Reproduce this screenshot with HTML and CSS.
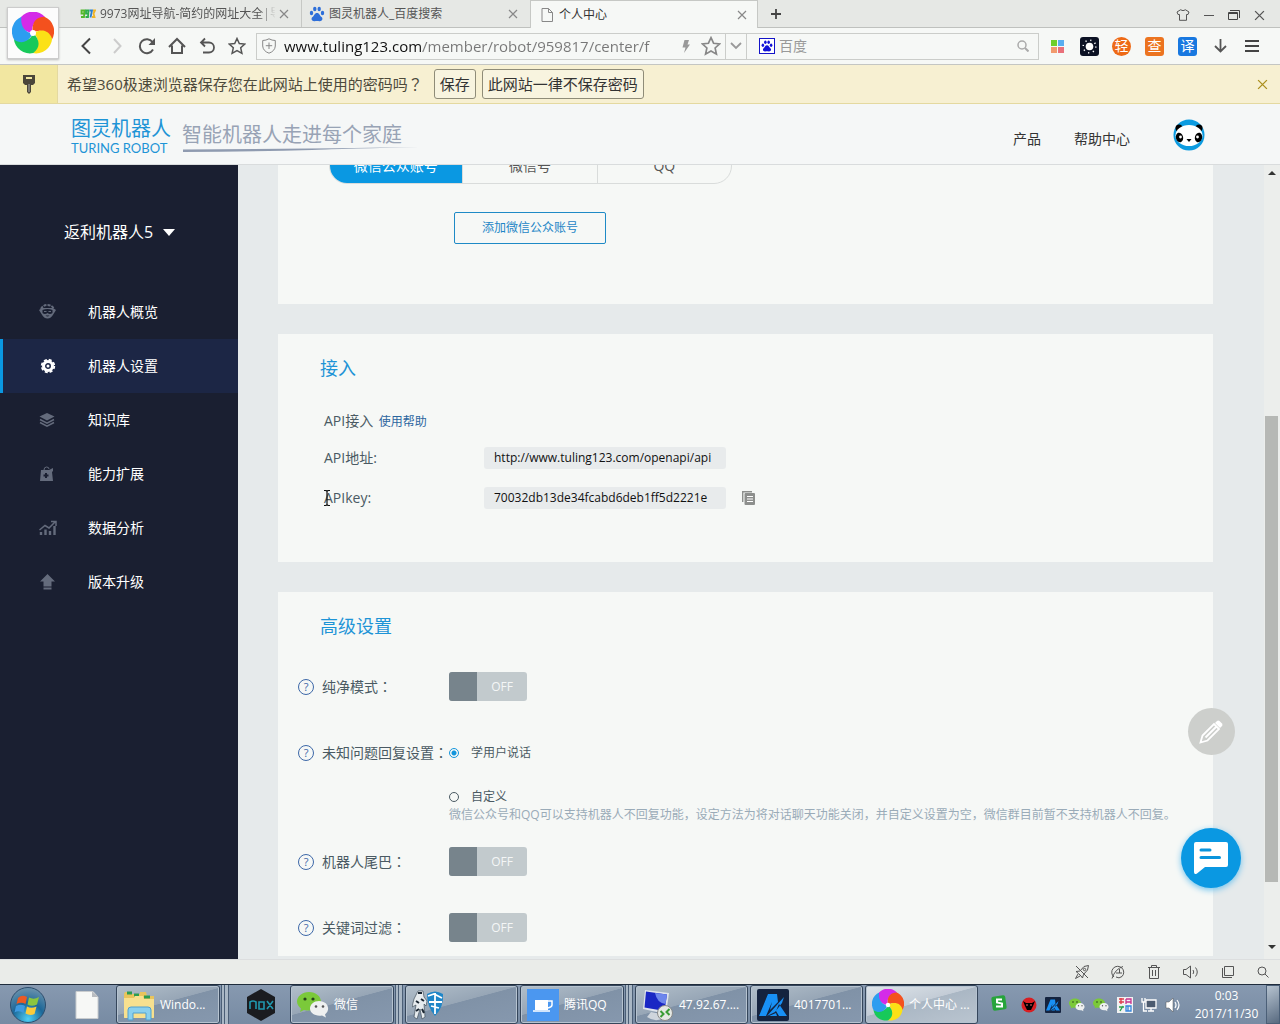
FILE: index.html
```html
<!DOCTYPE html>
<html lang="zh-CN">
<head>
<meta charset="utf-8">
<title>个人中心</title>
<meta name="viewport" content="width=device-width, initial-scale=1">
<link rel="stylesheet" href="styles.css">
</head>
<body>
<svg class="sprite" aria-hidden="true">
  <defs>
    <path id="petal" d="M0 0C-9 -1 -15 -7 -12 -16A16 16 0 0 1 12 -16C4 -15 -3 -8 0 0Z"/>
    <symbol id="pinwheel" viewBox="-21 -21 42 42">
      <use href="#petal" fill="#d42be8"/>
      <use href="#petal" fill="#f4511e" transform="rotate(72)"/>
      <use href="#petal" fill="#fbe116" transform="rotate(144)"/>
      <use href="#petal" fill="#17c95a" transform="rotate(216)"/>
      <use href="#petal" fill="#2d9df0" transform="rotate(288)"/>
      <circle r="3" fill="#fff"/>
    </symbol>
    <symbol id="paw" viewBox="0 0 16 16">
      <ellipse cx="2.500" cy="7" rx="1.700" ry="2.200"/><ellipse cx="5.800" cy="3" rx="1.700" ry="2.300"/><ellipse cx="10.200" cy="3" rx="1.700" ry="2.300"/><ellipse cx="13.500" cy="7" rx="1.700" ry="2.200"/>
      <path d="M8 7C5.500 7 5.500 9.500 3.500 11C1.500 12.500 3 15.500 5.500 15.200C7.500 14.900 8.500 14.900 10.500 15.200C13 15.500 14.500 12.500 12.500 11C10.500 9.500 10.500 7 8 7Z"/>
    </symbol>
    <symbol id="cross" viewBox="0 0 10 10"><path d="M1 1L9 9M9 1L1 9" fill="none" stroke="currentColor" stroke-width="1.200"/></symbol>
    <symbol id="star" viewBox="0 0 18 18"><path d="M9 1.500L11.300 6.500L16.800 7.100L12.700 10.800L13.900 16.300L9 13.500L4.100 16.300L5.300 10.800L1.200 7.100L6.700 6.500Z" fill="none" stroke="currentColor" stroke-width="1.500"/></symbol>
    <symbol id="wechat" viewBox="0 0 32 26">
      <path d="M12 0C5 0 0 4.500 0 9.500C0 12.500 2 15 4 16.500L3 20L7 18C16 20 24 16 24 9.500C24 4.500 19 0 12 0Z" fill="#7bc93a"/>
      <circle cx="8" cy="7" r="1.600" fill="#27431a"/><circle cx="16" cy="7" r="1.600" fill="#27431a"/>
      <path d="M22 9C17 9 13 12.500 13 16.500C13 21 18 24.500 25 23.500L29 25.500L28 22.500C34 18 31 9 22 9Z" fill="#eef0f0"/>
      <circle cx="19" cy="14.500" r="1.300" fill="#555"/><circle cx="26" cy="14.500" r="1.300" fill="#555"/>
    </symbol>
    <symbol id="letter-a" viewBox="0 0 32 32">
      <rect width="32" height="32" rx="2" fill="#14233f"/>
      <path d="M11 5H20L21 13L13 21L15 13L9 27H2ZM22 15L30 27H22L19 22ZM27 8L10 27L18 23L25 14ZM12 27L19 24L20 27Z" fill="#1890f5"/>
    </symbol>
  </defs>
</svg>

<header class="browser">
  <a class="browser-logo" href="#" aria-label="360极速浏览器"><svg width="42" height="42"><use href="#pinwheel"/></svg></a>
  <div class="tabs">
    <div class="tab tab-first">
      <svg width="16" height="10" viewBox="0 0 16 10" fill="none" stroke-width="1.800"><path d="M5 4.500H1.500V1.500H4.500L4 8H1" stroke="#55b82c"/><path d="M9 4.500H6V1.500H8.500L8 8H5.500" stroke="#2fae4a"/><path d="M9.500 1.500H12L10.500 8.500" stroke="#2b7fd0"/><path d="M13 1.500H15L13.500 4.500L14.500 8H12" stroke="#f0b429"/></svg>
      <span class="tab-title tab-fade">9973网址导航-简约的网址大全|导航</span>
      <button class="plain" aria-label="关闭"><svg width="10" height="10"><use href="#cross"/></svg></button>
    </div>
    <div class="tab">
      <svg width="16" height="16" fill="#2e6fd9"><use href="#paw"/></svg>
      <span class="tab-title">图灵机器人_百度搜索</span>
      <button class="plain" aria-label="关闭"><svg width="10" height="10"><use href="#cross"/></svg></button>
    </div>
    <div class="tab tab-active">
      <svg width="12" height="14" viewBox="0 0 12 14"><path d="M1 .5H7.500L11.500 4.500V13.500H1ZM7.500 .5V4.500H11.500" fill="none" stroke="#888"/></svg>
      <span class="tab-title">个人中心</span>
      <button class="plain" aria-label="关闭"><svg width="10" height="10"><use href="#cross"/></svg></button>
    </div>
    <button class="plain new-tab" aria-label="新标签页"><svg width="12" height="12" viewBox="0 0 12 12"><path d="M6 1V11M1 6H11" stroke="#444" stroke-width="1.800"/></svg></button>
    <div class="window-controls">
      <button class="plain" aria-label="皮肤"><svg width="14" height="12" viewBox="0 0 14 12"><path d="M4.500 .8Q7 2.500 9.500 .8L13 3L12 5.500H10.500V11.300H3.500V5.500H2L1 3Z" fill="none" stroke="#555"/></svg></button>
      <button class="plain" aria-label="最小化"><svg width="10" height="12" viewBox="0 0 10 12"><path d="M0 6.500H10" stroke="#555"/></svg></button>
      <button class="plain" aria-label="还原"><svg width="12" height="12" viewBox="0 0 12 12"><path d="M.5 3.500H9.500V10.500H.5ZM.5 4.500H9.500M2 1.500H11.500V9" fill="none" stroke="#444"/></svg></button>
      <button class="plain" aria-label="关闭窗口"><svg width="11" height="11"><use href="#cross"/></svg></button>
    </div>
  </div>
  <div class="toolbar">
    <nav class="tools" aria-label="浏览">
      <button class="plain" aria-label="后退"><svg width="18" height="18" viewBox="0 0 18 18"><path d="M12 1.500L4.500 9L12 16.500" fill="none" stroke="#444" stroke-width="2"/></svg></button>
      <button class="plain" aria-label="前进"><svg width="18" height="18" viewBox="0 0 18 18"><path d="M6 2L12.500 9L6 16" fill="none" stroke="#ccc" stroke-width="2"/></svg></button>
      <button class="plain" aria-label="刷新"><svg width="18" height="18" viewBox="0 0 18 18"><path d="M15 12.500A7 7 0 1 1 14.500 5" fill="none" stroke="#555" stroke-width="2"/><path d="M17 1V8H10.500Z" fill="#555"/></svg></button>
      <button class="plain" aria-label="主页"><svg width="18" height="18" viewBox="0 0 18 18"><path d="M1 10L9 2L17 10M4 8.500V16H14V8.500" fill="none" stroke="#555" stroke-width="2"/></svg></button>
      <button class="plain" aria-label="恢复"><svg width="18" height="18" viewBox="0 0 18 18"><path d="M3 5.500H11A5 5 0 0 1 11 15.500H5M7 1.500L3 5.500L7 9.500" fill="none" stroke="#555" stroke-width="1.800"/></svg></button>
      <button class="plain" aria-label="收藏夹"><svg width="18" height="18"><use href="#star"/></svg></button>
    </nav>
    <form class="address">
      <svg width="14" height="16" viewBox="0 0 14 16"><path d="M7 .8Q10 2.500 13.300 2.500V8Q13 13 7 15.200Q1 13 .7 8V2.500Q4 2.500 7 .8ZM7 4.500V11M3.800 7.700H10.200" fill="none" stroke="#888"/></svg>
      <input class="url" type="text" aria-label="地址" value="www.tuling123.com/member/robot/959817/center/f">
      <svg width="8" height="13" viewBox="0 0 8 13"><path d="M2.500 0H7L5.500 4.500H8L2 13L3.500 7.500H.5Z" fill="#999"/></svg>
      <button class="plain" type="button" aria-label="收藏"><svg width="20" height="20"><use href="#star"/></svg></button>
      <button class="plain drop" type="button" aria-label="历史"><svg width="12" height="8" viewBox="0 0 12 8"><path d="M1 1L6 6L11 1" fill="none" stroke="#999" stroke-width="1.800"/></svg></button>
      <svg width="16" height="16" viewBox="0 0 16 16"><rect x=".5" y=".5" width="15" height="15" fill="#fff" stroke="#1414c8"/><use href="#paw" x="2" y="2" width="12" height="12" fill="#1414d8"/></svg>
      <input class="search" type="text" aria-label="搜索" placeholder="百度">
      <button class="plain" type="button" aria-label="搜索"><svg width="12" height="12" viewBox="0 0 12 12"><path d="M8 8L11.500 11.500" stroke="#aaa" stroke-width="2"/><circle cx="5" cy="5" r="4" fill="none" stroke="#aaa" stroke-width="1.500"/></svg></button>
    </form>
    <div class="extensions">
      <button class="plain" aria-label="应用"><svg width="13" height="13" viewBox="0 0 13 13"><path d="M0 0H6V6H0Z" fill="#6fce2b"/><path d="M7 0H13V6H7Z" fill="#5aaef0"/><path d="M0 7H6V13H0Z" fill="#f29a6d"/><path d="M7 7H13V13H7Z" fill="#e9707a"/></svg></button>
      <button class="plain" aria-label="亮度"><svg width="19" height="19" viewBox="0 0 19 19"><rect width="19" height="19" rx="3" fill="#0c1224"/><circle cx="9.500" cy="9.500" r="3.800" fill="#fff"/><circle cx="9.500" cy="9.500" r="6.300" fill="none" stroke="#fff" stroke-width="1.500" stroke-dasharray="1.200 3.750"/></svg></button>
      <button class="ext ext-round">轻</button>
      <button class="ext ext-orange">查</button>
      <button class="ext ext-blue">译</button>
      <button class="plain" aria-label="下载"><svg width="13" height="14" viewBox="0 0 13 14"><path d="M6.500 0V12.500M1 7L6.500 12.500L12 7" fill="none" stroke="#555" stroke-width="1.800"/></svg></button>
      <button class="plain" aria-label="菜单"><svg width="14" height="14" viewBox="0 0 14 14"><path d="M0 2H14M0 7H14M0 12H14" stroke="#444" stroke-width="2"/></svg></button>
    </div>
  </div>
</header>

<section class="savebar">
  <span class="key"><svg width="14" height="21" viewBox="0 0 14 21"><path d="M1 1H13V9L11 11H9V18L7 20L5 18V11H3L1 9Z" fill="#4b463a"/><path d="M4 3H10V5H4Z" fill="#f2e7a1"/><path d="M7 10V18" stroke="#aaa" /></svg></span>
  <p>希望360极速浏览器保存您在此网站上使用的密码吗<span class="centred" lang="zh-TW">？</span></p>
  <button class="save">保存</button>
  <button class="save">此网站一律不保存密码</button>
  <button class="plain dismiss" aria-label="关闭"><svg width="11" height="11"><use href="#cross"/></svg></button>
</section>

<header class="site">
  <a class="brand" href="#">
    <span class="brand-zh">图灵机器人</span>
    <span class="brand-en">TURING ROBOT</span>
  </a>
  <p class="slogan">智能机器人走进每个家庭
    <svg width="238" height="5" viewBox="0 0 238 5"><path d="M1 2.500Q120 2 238 0Q150 2 130 3Q70 4.500 1 5Z" fill="#8f9bb0"/></svg>
  </p>
  <nav class="site-nav">
    <a href="#">产品</a>
    <a href="#">帮助中心</a>
    <a class="avatar" href="#" aria-label="个人中心"><svg width="32" height="32" viewBox="0 0 32 32"><circle cx="16" cy="16" r="15.500" fill="#0c9be0"/><circle cx="6" cy="9" r="3.500"/><circle cx="26" cy="9" r="3.500"/><ellipse cx="16" cy="16.500" rx="13.500" ry="10.500" fill="#fff"/><ellipse cx="6.500" cy="18.500" rx="3.600" ry="4.800" transform="rotate(-15 6.500 18.500)"/><ellipse cx="25.500" cy="18.500" rx="3.600" ry="4.800" transform="rotate(15 25.500 18.500)"/><circle cx="7.500" cy="18" r="1.400" fill="#fff"/><circle cx="24.500" cy="18" r="1.400" fill="#fff"/><path d="M13.500 20H18.500L16 23Z"/></svg></a>
  </nav>
</header>

<div class="page">
  <aside class="sidebar">
    <button class="robot">返利机器人5 <svg width="12" height="7" viewBox="0 0 12 7"><path d="M0 0H12L6 7Z" fill="#fff"/></svg></button>
    <nav class="menu">
      <a href="#"><svg width="18" height="16" viewBox="0 0 18 16"><path d="M2 5Q4 1 8.500 1T15 5" fill="none" stroke="currentColor" stroke-width="2" stroke-dasharray="3 1"/><path d="M0 6L3 4H14L17 6L14.500 10Q12 14.500 8.500 14.500T2.500 10ZM3.500 6V9Q6 11 8.500 9Q11 11 13.500 9V6Q8.500 4 3.500 6ZM6.500 11.500Q8.500 13.500 10.500 11.500Z" fill="currentColor" fill-rule="evenodd"/><path d="M5 7.500H7.500M9.500 7.500H12" stroke="currentColor"/></svg>机器人概览</a>
      <a class="current" href="#" aria-current="page"><svg width="18" height="16" viewBox="0 0 18 16"><circle cx="9" cy="8" r="4.500" fill="none" stroke="currentColor" stroke-width="3"/><circle cx="9" cy="8" r="6.300" fill="none" stroke="currentColor" stroke-width="1.800" stroke-dasharray="3 1.950"/><circle cx="9" cy="8" r="1.500" fill="currentColor"/></svg>机器人设置</a>
      <a href="#"><svg width="18" height="16" viewBox="0 0 18 16"><path d="M8 1L15.500 4.500L8 8.500L.5 4.500Z" fill="currentColor"/><path d="M1 7.500L8 11.200L15 7.500M1 10.500L8 14.200L15 10.500" fill="none" stroke="currentColor" stroke-width="1.500"/></svg>知识库</a>
      <a href="#"><svg width="18" height="16" viewBox="0 0 18 16"><path d="M2 4H10L14 2V5L13 6L14 15H1Z" fill="currentColor"/><path d="M5 4Q5 1 7.500 1T10 3" fill="none" stroke="currentColor"/><path d="M7 7V12M4.500 9.500H9.500" stroke="#1a1f31" stroke-width="2"/></svg>能力扩展</a>
      <a href="#"><svg width="18" height="16" viewBox="0 0 18 16"><path d="M2 15V12M6.500 15V9.500M11 15V11M15.500 15V6" stroke="currentColor" stroke-width="2.400"/><path d="M.5 10L6 5.500L10 8L16 2M12 1.500H17V6" fill="none" stroke="currentColor" stroke-width="1.500"/></svg>数据分析</a>
      <a href="#"><svg width="18" height="16" viewBox="0 0 18 16"><path d="M8.500 0L16 7.500H12.500V12.500H4.500V7.500H1ZM4.500 13.500H12.500V15.500H4.500Z" fill="currentColor"/></svg>版本升级</a>
    </nav>
  </aside>

  <main class="content">
    <section class="card accounts">
      <div class="segments-window">
        <div class="segments">
          <button class="on">微信公众账号</button><button>微信号</button><button>QQ</button>
        </div>
      </div>
      <button class="add">添加微信公众账号</button>
    </section>

    <section class="card access">
      <h2>接入</h2>
      <p class="access-intro">API接入 <a href="#">使用帮助</a></p>
      <dl>
        <div><dt>API地址:</dt><dd><code>http://www.tuling123.com/openapi/api</code></dd></div>
        <div><dt>APIkey:</dt><dd><code>70032db13de34fcabd6deb1ff5d2221e</code><button class="plain" aria-label="复制"><svg width="14" height="14" viewBox="0 0 14 14"><path d="M.7 11V.7H10" fill="none" stroke="#8d8f8d" stroke-width="1.400"/><rect x="2.500" y="2" width="10.500" height="12" rx="1" fill="#8d8f8d"/><path d="M5 5.500H11M5 8H11M5 10.500H11" stroke="#fff"/></svg></button></dd></div>
      </dl>
      <svg class="caret" width="8" height="16" viewBox="0 0 8 16" aria-hidden="true"><path d="M1 .5H3L4 1.500L5 .5H7M1 15.500H3L4 14.500L5 15.500H7M4 1V15" fill="none" stroke="#111" stroke-width="1.200"/></svg>
    </section>

    <section class="card advanced">
      <h2>高级设置</h2>
      <div class="setting">
        <button class="help" aria-label="纯净模式说明">?</button>
        <label for="pure">纯净模式<span class="centred" lang="zh-TW">：</span></label>
        <label class="switch"><input id="pure" type="checkbox"><span>OFF</span></label>
      </div>
      <div class="setting setting-reply">
        <button class="help" aria-label="回复设置说明">?</button>
        <span id="reply">未知问题回复设置<span class="centred" lang="zh-TW">：</span></span>
        <div role="radiogroup" aria-labelledby="reply">
          <label class="choice choice-tall"><input type="radio" name="reply" checked>学用户说话</label>
          <label class="choice"><input type="radio" name="reply">自定义</label>
          <p class="hint">微信公众号和QQ可以支持机器人不回复功能，设定方法为将对话聊天功能关闭，并自定义设置为空，微信群目前暂不支持机器人不回复。</p>
        </div>
      </div>
      <div class="setting">
        <button class="help" aria-label="机器人尾巴说明">?</button>
        <label for="tail">机器人尾巴<span class="centred" lang="zh-TW">：</span></label>
        <label class="switch"><input id="tail" type="checkbox"><span>OFF</span></label>
      </div>
      <div class="setting">
        <button class="help" aria-label="关键词过滤说明">?</button>
        <label for="filter">关键词过滤<span class="centred" lang="zh-TW">：</span></label>
        <label class="switch"><input id="filter" type="checkbox"><span>OFF</span></label>
      </div>
    </section>
  </main>

  <div class="scrollbar" aria-hidden="true">
    <svg width="8" height="4" viewBox="0 0 8 4"><path d="M0 4H8L4 0Z" fill="#333"/></svg>
    <div class="track"><div class="thumb"></div></div>
    <svg width="8" height="4" viewBox="0 0 8 4"><path d="M0 0H8L4 4Z" fill="#333"/></svg>
  </div>

  <div class="floating">
    <button class="edit" aria-label="反馈"><svg width="24" height="24" viewBox="0 0 24 24"><path d="M1.500 22.500L3.500 15.500L15 4L20 9L8.500 20.500ZM6.500 17.500L17 7" fill="none" stroke="#fff" stroke-width="1.800"/><path d="M16 3L18 1Q19 0 20.500 1L23 3.500Q24 5 23 6L21 8Z" fill="#fff"/></svg></button>
    <button class="chat" aria-label="在线咨询"><svg width="36" height="34" viewBox="0 0 36 34"><path d="M3 1H33Q35 1 35 3V24Q35 26 33 26H12L4 32.500Q1 34 1 31V3Q1 1 3 1Z" fill="#fff"/><path d="M8 9H17M8 16.500H26.500" stroke="#0a94dc" stroke-width="3" stroke-linecap="round"/></svg></button>
  </div>
</div>

<footer class="statusbar">
  <button class="plain" aria-label="加速"><svg width="14" height="14" viewBox="0 0 14 14"><path d="M13.500 .5L9 1.500L5 6L1 6.500L3.500 8.500L6 11L7.500 13L8.500 9.500L12.500 5ZM3 9L.5 13.500L5 11M1 1L13 13" fill="none" stroke="#555"/><circle cx="9.500" cy="4.500" r="1.200" fill="none" stroke="#555"/></svg></button>
  <button class="plain" aria-label="极速"><svg width="14" height="14" viewBox="0 0 14 14"><path d="M3 12A6 6 0 1 1 11 11.500Q8 14 5 12M1 13.500Q4 4 12 1.500M8.500 4V8M5 8H11" fill="none" stroke="#555"/></svg></button>
  <button class="plain" aria-label="清理"><svg width="14" height="14" viewBox="0 0 14 14"><path d="M1 2.500H13M4.500 2.500V.5H9.500V2.500M2.500 2.500V13.500H11.500V2.500M5.500 5V11M8.500 5V11" fill="none" stroke="#555"/></svg></button>
  <button class="plain" aria-label="声音"><svg width="16" height="14" viewBox="0 0 16 14"><path d="M.5 4.500H3L7.500 1V13L3 9.500H.5ZM10 5Q11.500 7 10 9M12.500 2.500Q16 7 12.500 11.500" fill="none" stroke="#555"/></svg></button>
  <button class="plain" aria-label="窗口"><svg width="14" height="14" viewBox="0 0 14 14"><path d="M3.500 1.500H12.500V10.500H3.500ZM1.500 3V12.500H11" fill="none" stroke="#555"/></svg></button>
  <button class="plain" aria-label="缩放"><svg width="12" height="12" viewBox="0 0 12 12"><path d="M8 8L11.500 11.500" stroke="#555"/><circle cx="5" cy="5" r="4" fill="none" stroke="#555"/></svg></button>
</footer>

<footer class="taskbar">
  <button class="plain start" aria-label="开始"><svg width="38" height="38" viewBox="0 0 38 38"><defs><radialGradient id="orb" cx=".5" cy=".9" r=".9"><stop offset="0" stop-color="#4fd0f5"/><stop offset=".5" stop-color="#1c6798"/><stop offset="1" stop-color="#6f94ad"/></radialGradient></defs><circle cx="19" cy="19" r="17.500" fill="url(#orb)" stroke="#2d4d6d"/><path d="M9 12Q13 8 18 11L16.500 18Q12 15.500 7.500 18Z" fill="#ea5a24"/><path d="M20 11.500Q25 14 30 11L28 18.500Q23 21 18.500 18.500Z" fill="#8cc63f"/><path d="M7 20Q12 17.500 16 20L14.500 27Q10 24 5.500 26.500Z" fill="#3f9ae0"/><path d="M18 20.500Q22 23 27.500 20.500L25.500 28Q21 30 16.500 27.500Z" fill="#fccb3b"/></svg></button>
  <button class="plain slot" aria-label="文档"><svg width="24" height="28" viewBox="0 0 24 28"><path d="M1 .5H18L23 6V27.500H1Z" fill="#f7f8f6" stroke="#c9ccce"/><path d="M17 .5V6H23Z" fill="#b9bcc0"/></svg></button>
  <div class="group stacked"><button class="task"><svg width="32" height="32" viewBox="0 0 32 32"><path d="M1 5L2 3H8L9 5H17V3H23L24 7H31V29H1Z" fill="#e9c45c"/><path d="M4 4H9M11 6H16M21 8H27" stroke="#2c9c50" stroke-width="3"/><path d="M1 9H11L12 7H20L21 10H31V28Q31 29 30 29H2Q1 29 1 28Z" fill="#f7e08f"/><path d="M5 31V21Q5 18 8 18H25Q28 18 28 21V31H23V24H10V31Z" fill="#8ad0ee" stroke="#4fa0d0"/></svg>Windo...</button></div>
  <button class="plain slot" aria-label="夜神"><svg width="30" height="34" viewBox="0 0 30 34"><path d="M15 1L29 9V25L15 33L1 25V9Z" fill="#1b1c20"/><path d="M4 21V14Q7 12 10 14V21M13 14H18V21H13ZM21 13L27 21M27 13L21 21" fill="none" stroke="#2197ad" stroke-width="1.600"/></svg></button>
  <div class="group stacked"><button class="task"><svg width="32" height="26"><use href="#wechat"/></svg>微信</button></div>
  <div class="group"><button class="task" aria-label="守护"><svg width="32" height="32" viewBox="0 0 32 32"><path d="M6 2H11L12 8L15 12L14 17L12 15L13 28L10 30L8 20L5 30L2 28L4 16L0 18L2 10Z" fill="#e7ecef" stroke="#34414e" stroke-width=".6"/><path d="M6 4H10M4 12L7 14M9 10L12 12M4 22L7 20M10 20L12 24" stroke="#1b2733" stroke-width="2"/><path d="M15 5Q23 0 31 5Q32 18 23 27Q15 18 15 5Z" fill="#1f86c8"/><path d="M16 7L22 5L30 9M17 13H30M23 4V25M19 17L27 19" stroke="#fff" stroke-width="1.800" fill="none"/></svg></button></div>
  <div class="group stacked"><button class="task"><svg width="32" height="32" viewBox="0 0 32 32"><rect width="32" height="32" fill="#4b97f0"/><path d="M8 11H21V21H8Z" fill="#fff"/><path d="M21 12H25V16Q25 18 21 19M6 22H23" fill="none" stroke="#fff" stroke-width="1.500"/></svg>腾讯QQ</button></div>
  <div class="group"><button class="task"><svg width="32" height="32" viewBox="0 0 32 32"><path d="M3 1L27 4L24 25L1 20Z" fill="#dfe4ec"/><path d="M4 2.500L25 5.500L22.500 22L2.500 18.500Z" fill="#1a27c4"/><path d="M13 4L25 5.500L23.500 15Q15 14 13 4Z" fill="#6d86ec"/><path d="M9 23L19 25L20 30Q12 33 5 28Z" fill="#cfd5dc"/><circle cx="23" cy="24" r="7.500" fill="#e5e8e4" stroke="#888"/><path d="M18.500 22L21.500 25L18.500 28M27.500 20L24.500 23L27.500 26" fill="none" stroke="#3a9b35" stroke-width="2"/></svg>47.92.67....</button></div>
  <div class="group"><button class="task"><svg width="32" height="32"><use href="#letter-a"/></svg>4017701...</button></div>
  <div class="group"><button class="task task-active"><svg width="32" height="32"><use href="#pinwheel"/></svg>个人中心 ...</button></div>
  <div class="tray">
    <svg class="ime" width="16" height="20" viewBox="0 0 16 20"><rect x="1" y="1" width="14" height="14" rx="2" fill="#27a43b" transform="rotate(-8 8 8)"/><path d="M11 4.500H6V7.500L11 8.500V11.500H5" fill="none" stroke="#fff" stroke-width="2"/></svg>
    <svg width="16" height="16" viewBox="0 0 16 16"><circle cx="8" cy="8" r="7.500" fill="#d81e22"/><path d="M2 4L5 6H11L14 4L12 9L10 13H6L4 9Z"/><path d="M5 8H7M9 8H11" stroke="#e66"/></svg>
    <svg width="16" height="16"><use href="#letter-a"/></svg>
    <svg width="16" height="14"><use href="#wechat"/></svg>
    <svg width="16" height="14"><use href="#wechat"/></svg>
    <svg width="16" height="16" viewBox="0 0 16 16"><rect width="16" height="16" fill="#f2f2f2"/><path d="M2 2H7M2 5H7M4 1V7" stroke="#e0404c" stroke-width="1.400"/><path d="M9 2H14V7M9 2V7M9 5H14" stroke="#c8348f" fill="none" stroke-width="1.300"/><path d="M2 10H7M3 14L6 9" stroke="#2ca24c" stroke-width="1.400"/><path d="M9 9H14V14H9ZM11 9V14" stroke="#3585dc" fill="none" stroke-width="1.300"/></svg>
    <svg width="16" height="16" viewBox="0 0 16 16"><path d="M5 3H15V11H5ZM7 14H13M10 11V14" fill="#4c5b70" stroke="#fff" stroke-width="1.300"/><path d="M1 1V5H4V1M2.500 5V14H6" fill="none" stroke="#fff" stroke-width="1.300"/></svg>
    <svg width="16" height="16" viewBox="0 0 16 16"><path d="M1 5H4L8 1V15L4 11H1Z" fill="#fff" stroke="#555" stroke-width=".5"/><path d="M10 5Q12 8 10 11M12 3Q16 8 12 13" fill="none" stroke="#fff" stroke-width="1.200"/></svg>
    <p class="clock"><time datetime="2017-11-30T00:03">0:03<br>2017/11/30</time></p>
    <button class="desktop" aria-label="显示桌面"></button>
  </div>
</footer>
</body>
</html>
```
FILE: styles.css
```css
* { box-sizing: border-box; }

body {
  display: flex;
  flex-direction: column;
  min-height: 100vh;
  margin: 0;
  background: #e8eaeb;
  color: #4a5a63;
  font: 14px/20px "Open Sans", "Noto Sans CJK SC", sans-serif;
}

h2, p, dl, dd { margin: 0; }
svg { flex: none; display: block; }
a { color: inherit; text-decoration: none; }
button, input { font: inherit; color: inherit; }
button { cursor: pointer; }

.sprite { position: absolute; width: 0; height: 0; }

/* Full-width punctuation set in the middle of its cell */
.centred { font-family: "Noto Sans CJK TC", sans-serif; line-height: 16px; }

.plain {
  display: flex;
  align-items: center;
  justify-content: center;
  padding: 0;
  border: 0;
  background: none;
}

/* Browser window */
.browser { position: relative; color: #333; }

.browser-logo {
  position: absolute;
  left: 7px;
  top: 7px;
  display: grid;
  place-items: center;
  width: 52px;
  height: 52px;
  background: #fcfcfc;
  border: 1px solid #ccc;
  box-shadow: 0 1px 2px #bbb;
}

.tabs {
  display: flex;
  height: 28px;
  padding-left: 71px;
  background: #e6e8e5;
  border-bottom: 1px solid #bfc1be;
  font-size: 12px;
}

.tab {
  display: flex;
  align-items: center;
  gap: 4px;
  flex: 0 1 228px;
  min-width: 0;
  padding: 0 12px 0 7px;
  color: #555;
}
.tab .plain { color: #888; }
.tab-first { padding-left: 9px; border-right: 1px solid #c6c8c5; flex-basis: 231px; }
.tab-title { flex: 1; overflow: hidden; white-space: nowrap; }
.tab-fade { -webkit-mask-image: linear-gradient(90deg, #000 160px, transparent 176px); mask-image: linear-gradient(90deg, #000 160px, transparent 176px); }
.tab-active {
  gap: 6px;
  margin-bottom: -1px;
  padding: 0 10px;
  background: #f6f8f6;
  border: 1px solid #c6c8c5;
  border-bottom: 0;
  color: #333;
}
.new-tab { width: 36px; }

.window-controls {
  display: flex;
  align-items: center;
  gap: 14px;
  margin-left: auto;
  padding: 3px 15px 0 0;
  color: #555;
}

.toolbar {
  display: flex;
  align-items: center;
  height: 37px;
  padding-left: 78px;
  background: #f6f8f6;
  border-bottom: 1px solid #c4c6c3;
}

.tools { display: flex; gap: 12px; color: #555; padding-right: 10px; }

.address {
  display: flex;
  align-items: center;
  flex: 1;
  min-width: 0;
  height: 27px;
  padding: 0 9px 0 5px;
  border: 1px solid #cbcdca;
  color: #888;
}
.address input { min-width: 0; padding: 0; border: 0; outline: 0; }
.address .url {
  width: 386px;
  margin: 0 12px 0 8px;
  background: linear-gradient(90deg, #111 138px, #777 138px);
  -webkit-background-clip: text;
  background-clip: text;
  -webkit-text-fill-color: transparent;
  font-size: 15px;
}
.address svg + .plain { margin: 0 4px 0 11px; }
.address .drop {
  width: 22px;
  height: 25px;
  margin-right: 12px;
  border: solid #cbcdca;
  border-width: 0 1px;
}
.address .search { flex: 1; margin-left: 4px; background: none; }
.search::placeholder { color: #999; opacity: 1; }

.extensions { display: flex; align-items: center; padding: 0 12px 0 2px; }
.extensions .plain { width: 32px; height: 27px; }
.ext {
  width: 19px;
  height: 19px;
  margin: 0 7px;
  padding: 0;
  border: 0;
  border-radius: 3px;
  color: #fff;
  font-size: 14px;
  line-height: 18px;
}
.ext-round { background: #ee6a16; border-radius: 50%; }
.ext-orange { background: #ec7420; }
.ext-blue { background: #1878e0; }

/* Password prompt */
.savebar {
  display: flex;
  align-items: center;
  gap: 6px;
  height: 39px;
  padding-right: 12px;
  background: #f7f0d2;
  border-bottom: 1px solid #e4d9a0;
  color: #4d4a3c;
  font-size: 15px;
}
.savebar p { margin: 0 5px 0 3px; }
.key {
  display: grid;
  place-items: center;
  align-self: stretch;
  width: 58px;
  background: #f2e7a1;
  border-right: 1px solid #e4d9a0;
}
.save {
  height: 30px;
  padding: 0 5px;
  background: #f8f4df;
  border: 1px solid #8f8c78;
  border-radius: 3px;
  color: #333;
}
.dismiss { margin-left: auto; color: #ab8f1e; }

/* Site header */
.site {
  display: flex;
  align-items: center;
  height: 61px;
  padding: 0 75px 0 71px;
  background: #f5f7f7;
  border-bottom: 1px solid #d9dcdd;
}
.brand { display: flex; flex-direction: column; width: 111px; padding-top: 8px; color: #1e94d6; white-space: nowrap; }
.brand-zh { font-size: 20px; line-height: 20px; }
.brand-en { font: 13px/18px Lato, sans-serif; }
.slogan { padding-top: 6px; color: #98a3b5; font-size: 20px; line-height: 24px; }
.site-nav { display: flex; align-items: center; gap: 33px; margin-left: auto; padding-top: 10px; color: #333; }
.avatar { margin: -8px 0 0 10px; }

/* Page body */
.page { position: relative; display: flex; flex: 1; }

.sidebar { flex: none; width: 238px; background: #1a1f31; color: #fff; }
.robot {
  display: flex;
  align-items: center;
  gap: 10px;
  margin: 55px 0 0 64px;
  padding: 0;
  border: 0;
  background: none;
  font-size: 16px;
  line-height: 24px;
}
.menu { margin-top: 41px; }
.menu a {
  display: flex;
  align-items: center;
  gap: 31px;
  height: 54px;
  padding-left: 36px;
  border-left: 3px solid transparent;
}
.menu svg { color: #646b7c; }
.menu .current { background: #1c2645; border-color: #0a98e2; }
.menu .current svg { color: #fff; }

.content {
  display: flex;
  flex-direction: column;
  gap: 30px;
  flex: 1;
  min-width: 0;
  padding: 0 51px 3px 40px;
  background: #e6eaeb;
}
.card { position: relative; background: #f6f8f6; }
.card h2 { margin: 0; color: #1e94d6; font-size: 18px; font-weight: 400; line-height: 32px; }

.accounts { padding: 0 51px 60px; }
.segments-window { display: flex; align-items: flex-end; height: 19px; overflow: hidden; }
.segments {
  display: flex;
  width: 403px;
  height: 36px;
  border: 1px solid #d9dcdb;
  border-radius: 18px;
  overflow: hidden;
}
.segments button { flex: 1; padding: 0; border: 0; border-left: 1px solid #d9dcdb; background: none; color: #555; }
.segments .on { margin: -1px 0 -1px -1px; border: 0; background: #0a98e2; color: #fff; }
.add {
  display: block;
  width: 152px;
  height: 32px;
  margin: 28px 0 0 125px;
  padding: 0;
  background: none;
  border: 1px solid #1e8ac6;
  border-radius: 2px;
  color: #1e86c6;
  font-size: 12px;
}

.access { padding: 18px 42px 44px; }
.access-intro { margin: 21px 0 0 4px; line-height: 32px; }
.access-intro a { margin-left: 2px; color: #2c669f; font-size: 12px; }
.access dl { margin-left: 4px; }
.access dl div { display: grid; grid-template-columns: 160px 1fr; align-items: center; height: 40px; }
.access dd { display: flex; align-items: center; gap: 16px; }
.access code {
  min-width: 242px;
  padding: 0 10px;
  background: #e8ebec;
  border-radius: 3px;
  color: #111;
  font: 12px/22px "Open Sans", sans-serif;
}
.caret { position: absolute; left: 45px; top: 156px; }

.advanced { padding: 18px 20px 13px; }
.advanced h2 { margin: 0 22px 30px; }
.setting { display: grid; grid-template-columns: 24px 127px 1fr; line-height: 30px; margin-bottom: 36px; }
.setting:last-child { margin-bottom: 0; }
.setting-reply { margin-bottom: 24px; }
.setting > label, .setting > span { white-space: nowrap; }
.help {
  width: 16px;
  height: 16px;
  margin-top: 7px;
  padding: 0;
  border: 1px solid #3d68a8;
  border-radius: 50%;
  background: none;
  color: #3d68a8;
  font-size: 11px;
  line-height: 14px;
}
.switch {
  display: flex;
  width: 78px;
  height: 29px;
  border-radius: 3px;
  overflow: hidden;
  background: #c2cacd;
  color: #f4f6f6;
  font-size: 12px;
  line-height: 29px;
  text-align: center;
}
.switch input { appearance: none; width: 28px; height: 29px; margin: 0; background: #77848c; }
.switch span { flex: 1; }
.choice { display: flex; align-items: center; gap: 12px; font-size: 12px; line-height: 20px; }
.choice-tall { height: 30px; margin-bottom: 19px; }
.choice input {
  appearance: none;
  width: 10px;
  height: 10px;
  margin: 0;
  border: 1px solid #4a5a63;
  border-radius: 50%;
}
.choice input:checked { border-color: #1295dc; background: radial-gradient(#1295dc 2px, transparent 3px); }
.hint { color: #9aabb8; font-size: 12px; line-height: 16px; }

.scrollbar {
  display: flex;
  flex-direction: column;
  align-items: center;
  flex: none;
  width: 16px;
  padding: 6px 0 10px;
  background: #eceeec;
}
.track { display: flex; flex-direction: column; flex: 1; align-self: stretch; padding: 0 2px 0 1px; }
.track::before { content: ""; flex: 241; }
.thumb { flex: 466; background: #b6b8b5; }
.track::after { content: ""; flex: 63; }

.floating {
  position: absolute;
  right: 39px;
  bottom: 71px;
  display: flex;
  flex-direction: column;
  align-items: center;
  gap: 73px;
}
.floating button { display: grid; place-items: center; padding: 0; border: 0; border-radius: 50%; }
.edit { width: 47px; height: 47px; background: #cdcfcc; }
.chat { width: 60px; height: 60px; background: #0a98e2; box-shadow: 0 2px 6px #6fc3ee; }

/* Browser status bar */
.statusbar {
  display: flex;
  align-items: center;
  justify-content: flex-end;
  gap: 22px;
  height: 25px;
  padding-right: 11px;
  background: #eaece9;
  border-top: 1px solid #dcdedf;
}

/* Desktop taskbar */
.taskbar {
  display: flex;
  align-items: center;
  gap: 2px;
  height: 40px;
  background: linear-gradient(#8799b0, #778ba3);
  border-top: 1px solid #1f2c3c;
  color: #fff;
  font-size: 12px;
}
.start { width: 55px; }
.slot { width: 57px; padding-left: 2px; }
.group { display: flex; align-self: stretch; gap: 1px; flex: 0 1 113px; min-width: 0; }
.task {
  display: flex;
  align-items: center;
  gap: 5px;
  flex: 1;
  min-width: 0;
  padding: 0 6px;
  overflow: hidden;
  border: 1px solid #35465b;
  border-radius: 3px;
  box-shadow: inset 0 0 0 1px #b6c3d0;
  background: linear-gradient(165deg, #b2bfca 0%, #97a6b6 45%, #8092a7 46%, #8698ae 100%);
  color: #fff;
  white-space: nowrap;
}
.stacked::after {
  content: "";
  width: 6px;
  border: solid #4b5f77;
  border-width: 0 1px;
  background: linear-gradient(90deg, #a9b7c5 2px, #4b5f77 2px, #4b5f77 3px, #a9b7c5 3px);
}
.task-active { background: linear-gradient(165deg, #dfe5ea 0%, #c3ccd6 45%, #aab7c4 46%, #bac5d0 100%); }
.tray { display: flex; align-items: center; align-self: stretch; gap: 8px; margin-left: auto; }
.ime { margin-right: 6px; }
.clock { width: 75px; text-align: center; line-height: 18px; }
.desktop {
  align-self: stretch;
  width: 14px;
  margin-left: -6px;
  padding: 0;
  border: 1px solid #4b5f77;
  background: linear-gradient(150deg, #b6c3d0, #586a80);
}
```
